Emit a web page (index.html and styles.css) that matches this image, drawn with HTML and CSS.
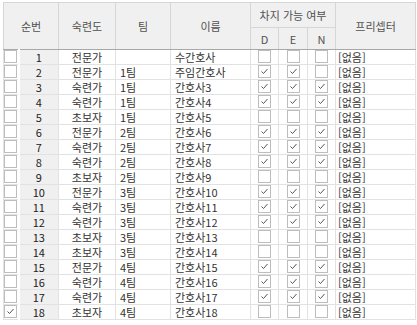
FILE: index.html
```html
<!DOCTYPE html>
<html lang="ko">
<head>
<meta charset="utf-8">
<link rel="stylesheet" href="styles.css">
</head>
<body>
<div class="wrap">
<table class="grid">
<colgroup>
<col class="c-cb"><col class="c-no"><col class="c-lv"><col class="c-team"><col class="c-name"><col class="c-d"><col class="c-e"><col class="c-n"><col class="c-pre">
</colgroup>
<thead>
<tr class="h1">
<th colspan="2" rowspan="2" class="tall">순번</th>
<th rowspan="2" class="tall">숙련도</th>
<th rowspan="2" class="tall">팀</th>
<th rowspan="2" class="tall">이름</th>
<th colspan="3" class="grp">차지 가능 여부</th>
<th rowspan="2" class="tall">프리셉터</th>
</tr>
<tr class="h2">
<th class="sub">D</th><th class="sub">E</th><th class="sub">N</th>
</tr>
</thead>
<tbody id="rows"></tbody>
</table>
</div>
<script src="app.js"></script>
</body>
</html>
```

FILE: styles.css
```css
html, body {
  margin: 0;
  padding: 0;
  background: #ffffff;
}
.wrap {
  padding: 2px 0 0 3px;
}
.grid {
  border-collapse: collapse;
  table-layout: fixed;
  width: 412px;
  font-family: "Noto Sans CJK KR", "Noto Sans", sans-serif;
  font-size: 11px;
  color: #333333;
}
.c-cb { width: 15px; }
.c-no { width: 40px; }
.c-lv { width: 57px; }
.c-team { width: 55px; }
.c-name { width: 80px; }
.c-d { width: 28px; }
.c-e { width: 29px; }
.c-n { width: 28px; }
.c-pre { width: 80px; }

.grid th {
  background: #f0f0f0;
  border: 1px solid #d6d6d6;
  font-weight: normal;
  color: #505050;
  padding: 0;
  text-align: center;
  vertical-align: middle;
  line-height: 14px;
}
.grid th.tall { height: 46px; border-bottom-color: #a8a8a8; }
.grid th.grp { height: 24px; }
.grid th.sub { height: 21px; border-bottom-color: #a8a8a8; }

.grid tbody tr { height: 15px; }
.grid td {
  height: 14px;
  border: 1px solid #e2e2e2;
  padding: 0;
  line-height: 14px;
  white-space: nowrap;
  overflow: hidden;
  vertical-align: top;
}
.grid td.cb {
  border-right: none;
  text-align: left;
}
.grid td.no {
  background: #f0f0f0;
  text-align: center;
  color: #222222;
  border-left: 2px solid #ffffff;
}
.grid td.lv { text-align: center; }
.grid td.team { padding-left: 4px; }
.grid td.name { padding-left: 4px; }
.grid td.chk { text-align: center; }
.grid td.pre { padding-left: 2px; }

.box {
  display: inline-block;
  box-sizing: border-box;
  width: 13px;
  height: 13px;
  border: 1px solid #bdbdbd;
  background: #ffffff;
  vertical-align: top;
}
.box svg {
  display: block;
}
```

FILE: app.js
```js
const data = [
  [0,"전문가","","수간호사",0,0,0],
  [0,"전문가","1팀","주임간호사",1,1,0],
  [0,"숙련가","1팀","간호사3",1,1,1],
  [0,"숙련가","1팀","간호사4",1,1,1],
  [0,"초보자","1팀","간호사5",0,0,0],
  [0,"전문가","2팀","간호사6",1,1,1],
  [0,"숙련가","2팀","간호사7",1,1,1],
  [0,"숙련가","2팀","간호사8",1,1,1],
  [0,"초보자","2팀","간호사9",0,0,0],
  [0,"전문가","3팀","간호사10",1,1,1],
  [0,"숙련가","3팀","간호사11",1,1,1],
  [0,"숙련가","3팀","간호사12",1,1,1],
  [0,"초보자","3팀","간호사13",0,0,0],
  [0,"초보자","3팀","간호사14",0,0,0],
  [0,"전문가","4팀","간호사15",1,1,1],
  [0,"숙련가","4팀","간호사16",1,1,1],
  [0,"숙련가","4팀","간호사17",1,1,1],
  [1,"초보자","4팀","간호사18",0,0,0]
];
const tick = '<svg width="11" height="11" viewBox="0 0 11 11"><polyline points="2.5,5.5 4.5,7.5 8.5,3" fill="none" stroke="#555" stroke-width="1"/></svg>';
function box(on){ return '<span class="box">' + (on ? tick : '') + '</span>'; }
const tb = document.getElementById('rows');
tb.innerHTML = data.map((r,i) =>
  '<tr>' +
  '<td class="cb">' + box(r[0]) + '</td>' +
  '<td class="no">' + (i+1) + '</td>' +
  '<td class="lv">' + r[1] + '</td>' +
  '<td class="team">' + r[2] + '</td>' +
  '<td class="name">' + r[3] + '</td>' +
  '<td class="chk">' + box(r[4]) + '</td>' +
  '<td class="chk">' + box(r[5]) + '</td>' +
  '<td class="chk">' + box(r[6]) + '</td>' +
  '<td class="pre">[없음]</td>' +
  '</tr>').join('');
```
